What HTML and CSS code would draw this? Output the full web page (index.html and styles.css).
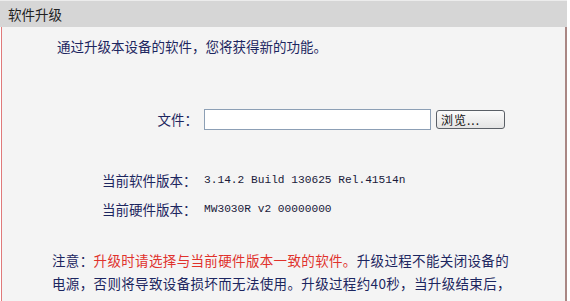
FILE: index.html
```html
<!DOCTYPE html>
<html lang="zh-CN">
<head>
    <meta charset="UTF-8">
    <title>软件升级</title>
    <link rel="stylesheet" href="styles.css">
</head>
<body>
    <div class="panel">
        <div class="panel-title">软件升级</div>
        <div class="panel-body">
            <p class="intro">通过升级本设备的软件，您将获得新的功能。</p>

            <div class="file-row">
                <span class="label">文件：</span>
                <input class="file-input" type="text">
                <button class="browse-button">浏览...</button>
            </div>

            <div class="info-list">
                <div class="info-row">
                    <span class="label">当前软件版本：</span>
                    <span class="value">3.14.2 Build 130625 Rel.41514n</span>
                </div>
                <div class="info-row">
                    <span class="label">当前硬件版本：</span>
                    <span class="value">MW3030R v2 00000000</span>
                </div>
            </div>

            <div class="note">
                <div class="note-line">注意：<span class="warn">升级时请选择与当前硬件版本一致的软件。</span>升级过程不能关闭设备的</div>
                <div class="note-line">电源，否则将导致设备损坏而无法使用。升级过程约40秒，当升级结束后，</div>
            </div>
        </div>
    </div>
</body>
</html>
```

FILE: styles.css
```css
body {
    margin: 0;
    background-color: #ffffff;
    font-family: "Noto Sans CJK SC", "Noto Sans", sans-serif;
    font-size: 13.5px;
    color: #1c2660;
    overflow: hidden;
}

.panel {
    width: 567px;
    height: 301px;
    display: flex;
    flex-direction: column;
}

.panel-title {
    height: 27px;
    line-height: 27px;
    padding-left: 8px;
    background-color: #d6d6d6;
    border-top: 1px solid #ececec;
    color: #222222;
    box-sizing: border-box;
    flex-shrink: 0;
}

.panel-body {
    flex: 1;
    background-color: #f4f4f4;
    border-left: 1px solid #e07a7a;
    border-right: 2px solid #a98784;
    margin-left: 1px;
}

.intro {
    margin: 0;
    padding-top: 9px;
    padding-left: 55px;
    line-height: 20px;
}

.file-row {
    display: flex;
    align-items: center;
    margin-top: 52px;
    height: 22px;
}

.label {
    width: 196px;
    text-align: right;
    flex-shrink: 0;
}

.file-input {
    width: 227px;
    height: 21px;
    margin: 0 0 0 6px;
    padding: 0;
    border: 1px solid #8c9fb5;
    background-color: #ffffff;
    box-sizing: border-box;
}

.browse-button {
    width: 69px;
    height: 19px;
    margin-left: 5px;
    padding: 0 0 0 4px;
    border: 1px solid #5a5f66;
    border-radius: 3px;
    background: linear-gradient(#fbfbfb, #e4e4e4);
    font-family: "Noto Sans CJK SC", sans-serif;
    font-size: 12px;
    line-height: 17px;
    color: #111111;
    text-align: left;
    letter-spacing: 1px;
}

.info-list {
    margin-top: 40px;
}

.info-row {
    display: flex;
    align-items: center;
    height: 20px;
    margin-bottom: 9px;
}

.info-row .label {
    width: 195px;
    padding-left: 100px;
    text-align: left;
    box-sizing: border-box;
}

.value {
    margin-left: 7px;
    font-family: "Liberation Mono", monospace;
    font-size: 11.2px;
    color: #1a1a3a;
}

.note {
    margin-top: 33px;
    padding-left: 50px;
    display: flex;
    flex-direction: column;
    gap: 7px;
}

.note-line {
    line-height: 16px;
    letter-spacing: 0.35px;
    white-space: nowrap;
}

.warn {
    color: #e0322c;
}
```
